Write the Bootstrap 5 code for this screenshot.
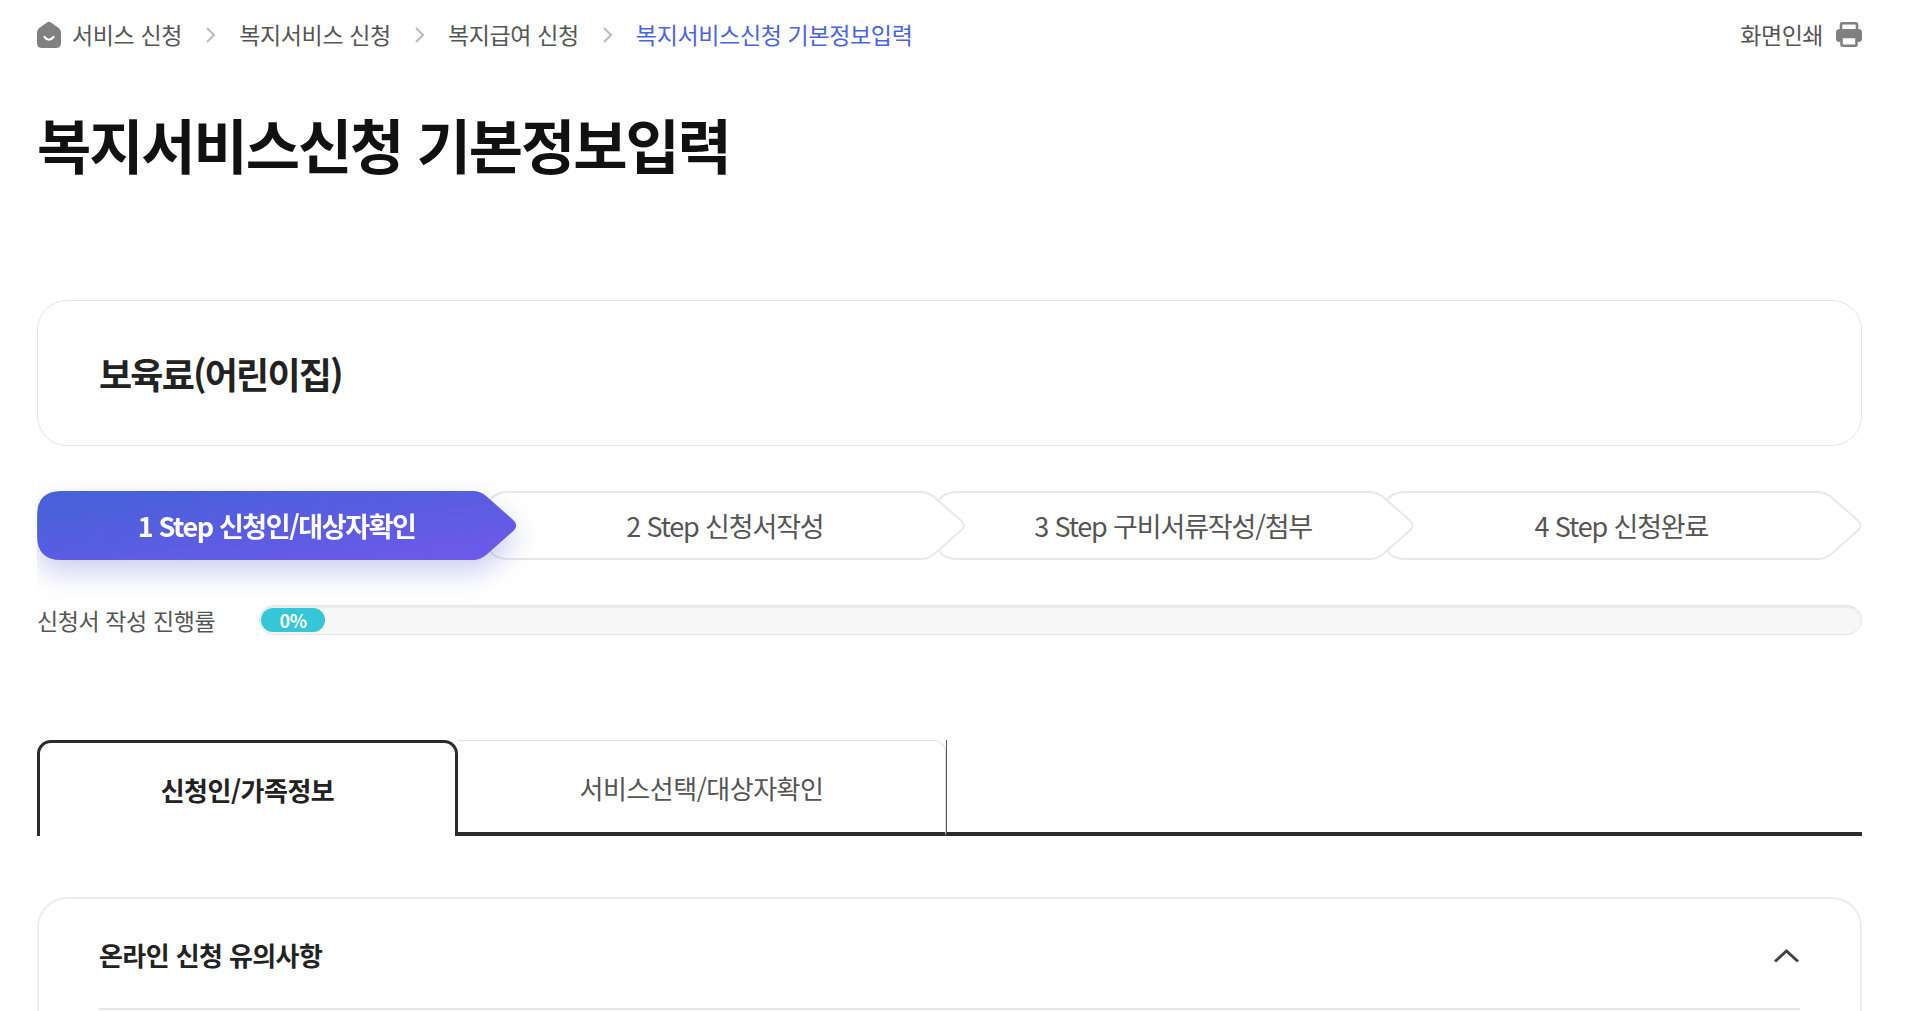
<!DOCTYPE html>
<html lang="ko">
<head>
<meta charset="utf-8">
<title>복지서비스신청 기본정보입력</title>
<link rel="stylesheet" href="https://cdn.jsdelivr.net/npm/bootstrap@5.3.0/dist/css/bootstrap.min.css">
<style>
html,body{height:100%;overflow:hidden;background:#fff}
body{font-family:"Noto Sans CJK KR","Noto Sans",sans-serif;color:#222}
.page-clip{height:1011px;overflow:hidden;padding:0 49px 0 37px}
.crumbs{height:69px;font-size:23px;letter-spacing:-.35px;color:#555}
.crumb-icon{margin-right:11px;flex:none}
.crumb-sep{width:10px;height:18px;margin:0 24px 0 23px;flex:none}
.crumb-now{color:#4a63e0}
.print-link{color:#555;font-size:23px;letter-spacing:-.5px;gap:13px}
.page-title{font-size:59px;font-weight:700;letter-spacing:-2.100px;line-height:84px;color:#111;margin:33px 0 114px}
.svc-box{height:146px;border:1px solid #e5e5e5;border-radius:30px;padding-left:61px;font-size:36px;font-weight:700;letter-spacing:-1.800px;color:#222;margin-bottom:45px}
.step-row{overflow-x:clip;overflow-y:visible;height:69px;margin-bottom:43px}
.step-item{position:relative;width:479.250px;height:69px;padding-top:2px;flex:none;margin-right:-31px;font-size:27px;letter-spacing:-1.150px;color:#555}
.step-item svg{position:absolute;inset:0;width:100%;height:100%;overflow:visible}
.step-item span{position:relative}
.step-on{color:#fff;font-weight:700;letter-spacing:-1.400px;filter:drop-shadow(0 12px 14px rgba(70,80,200,.28))}
.prog-label{width:222px;font-size:23px;letter-spacing:-.4px;color:#555;flex:none}
.prog-track{height:30px;flex:1;background:#f7f7f7;border:1px solid #e4e4e4;border-radius:15px;padding:2px 1px;box-shadow:inset 0 2px 2px rgba(0,0,0,.05)}
.prog-fill{width:64px;height:100%;background:#35c6d8;border-radius:13px;color:#fff;font-size:18px;font-weight:700;letter-spacing:-.5px}
.tab-row{height:96px;margin-top:102px;margin-bottom:61px}
.tab-one{width:421px;border:3px solid #2b2b2b;border-bottom:0;border-radius:14px 14px 0 0;font-size:26px;font-weight:700;letter-spacing:-.5px;color:#222}
.tab-two{width:488px;padding-top:2px;border-top:1px solid #e0e0e0;border-right:1px solid #e0e0e0;border-bottom:4px solid #2b2b2b;border-radius:0 12px 0 0;font-size:26px;letter-spacing:-.5px;color:#555}
.tab-rest{flex:1;border-left:1px solid #555;border-bottom:4px solid #2b2b2b}
.notice-box{border:2px solid #ececec;border-bottom:0;border-radius:30px 30px 0 0;padding:0 60px;height:200px}
.notice-head{height:111px;padding-top:2px;border-bottom:2px solid #e6e6e6;font-size:26px;font-weight:700;letter-spacing:-.6px;color:#222}
.notice-arrow{margin-top:2px}
</style>
</head>
<body>
<div class="page-clip">
  <div class="crumbs d-flex align-items-center">
    <svg class="crumb-icon" width="24" height="27" viewBox="0 0 24 27" aria-hidden="true"><path d="M10 1.500Q12 0 14 1.500L21 6.500Q24 8.500 24 12V22Q24 27 19 27H5Q0 27 0 22V12Q0 8.500 3 6.500Z" fill="#808080"/><path d="M7.500 16Q12 21.500 16.500 16" fill="none" stroke="#fff" stroke-width="2.200" stroke-linecap="round"/></svg>
    <span>서비스 신청</span>
    <svg class="crumb-sep" viewBox="0 0 10 18" aria-hidden="true"><path d="M2 2 9 9 2 16" fill="none" stroke="#bbb" stroke-width="2"/></svg>
    <span>복지서비스 신청</span>
    <svg class="crumb-sep" viewBox="0 0 10 18" aria-hidden="true"><path d="M2 2 9 9 2 16" fill="none" stroke="#bbb" stroke-width="2"/></svg>
    <span>복지급여 신청</span>
    <svg class="crumb-sep" viewBox="0 0 10 18" aria-hidden="true"><path d="M2 2 9 9 2 16" fill="none" stroke="#bbb" stroke-width="2"/></svg>
    <span class="crumb-now">복지서비스신청 기본정보입력</span>
    <div class="ms-auto d-flex align-items-center print-link">
      <span>화면인쇄</span>
      <svg width="26" height="25" viewBox="0 0 26 25" aria-hidden="true"><rect x="5" y="1.300" width="16" height="10" rx="1.500" fill="#fff" stroke="#808080" stroke-width="2.600"/><rect x="0" y="7" width="26" height="13" rx="3.500" fill="#808080"/><rect x="5.500" y="15" width="15" height="8.700" rx="1" fill="#fff" stroke="#808080" stroke-width="2.600"/></svg>
    </div>
  </div>
  <h1 class="page-title">복지서비스신청 기본정보입력</h1>
  <div class="svc-box d-flex align-items-center">보육료(어린이집)</div>
  <div class="step-row d-flex">
    <div class="step-item step-on d-flex align-items-center justify-content-center" style="z-index:4">
      <svg viewBox="0 0 479 69" aria-hidden="true"><defs><linearGradient id="stepGrad" x1="0" y1="0" x2="1" y2="1"><stop offset="0" stop-color="#4462d8"/><stop offset="1" stop-color="#7058ea"/></linearGradient></defs><path d="M24 0H436Q443 0 449 5L475 28Q483 34.500 475 41L449 64Q443 69 436 69H24Q0 69 0 45V24Q0 0 24 0Z" fill="url(#stepGrad)"/></svg>
      <span>1 Step 신청인/대상자확인</span>
    </div>
    <div class="step-item d-flex align-items-center justify-content-center" style="z-index:3">
      <svg viewBox="0 0 479 69" aria-hidden="true"><path d="M24 1H436Q443 1 449 6L474 28Q483 34.500 474 41L449 63Q443 68 436 68H24Q1 68 1 45V24Q1 1 24 1Z" fill="#fff" stroke="#e8e8e8" stroke-width="2"/></svg>
      <span>2 Step 신청서작성</span>
    </div>
    <div class="step-item d-flex align-items-center justify-content-center" style="z-index:2">
      <svg viewBox="0 0 479 69" aria-hidden="true"><path d="M24 1H436Q443 1 449 6L474 28Q483 34.500 474 41L449 63Q443 68 436 68H24Q1 68 1 45V24Q1 1 24 1Z" fill="#fff" stroke="#e8e8e8" stroke-width="2"/></svg>
      <span>3 Step 구비서류작성/첨부</span>
    </div>
    <div class="step-item d-flex align-items-center justify-content-center" style="z-index:1">
      <svg viewBox="0 0 479 69" aria-hidden="true"><path d="M24 1H436Q443 1 449 6L474 28Q483 34.500 474 41L449 63Q443 68 436 68H24Q1 68 1 45V24Q1 1 24 1Z" fill="#fff" stroke="#e8e8e8" stroke-width="2"/></svg>
      <span>4 Step 신청완료</span>
    </div>
  </div>
  <div class="d-flex align-items-center">
    <div class="prog-label">신청서 작성 진행률</div>
    <div class="prog-track"><div class="prog-fill d-flex align-items-center justify-content-center">0%</div></div>
  </div>
  <div class="tab-row d-flex">
    <div class="tab-one d-flex align-items-center justify-content-center">신청인/가족정보</div>
    <div class="tab-two d-flex align-items-center justify-content-center">서비스선택/대상자확인</div>
    <div class="tab-rest"></div>
  </div>
  <div class="notice-box">
    <div class="notice-head d-flex align-items-center justify-content-between">
      <span>온라인 신청 유의사항</span>
      <svg class="notice-arrow" width="27" height="15" viewBox="0 0 27 15" aria-hidden="true"><path d="M2 13.500 13.500 3 25 13.500" fill="none" stroke="#444" stroke-width="3"/></svg>
    </div>
  </div>
</div>
<script src="https://cdn.jsdelivr.net/npm/bootstrap@5.3.0/dist/js/bootstrap.bundle.min.js"></script>
</body>
</html>
